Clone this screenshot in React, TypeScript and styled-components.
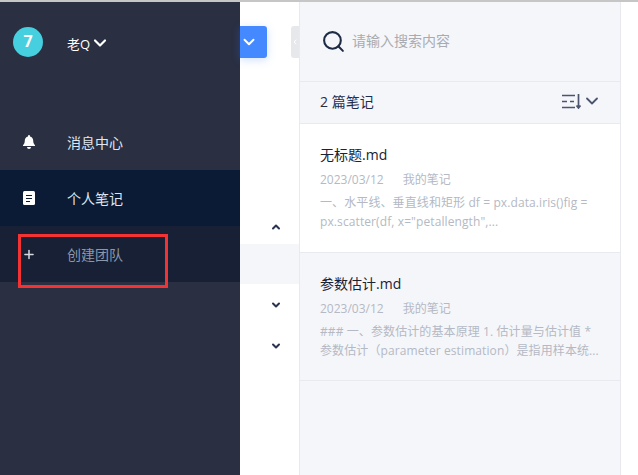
import React from "react";
import styled, { createGlobalStyle } from "styled-components";
import { ChevronDown, ChevronLeft, ChevronUp, Plus, Search } from "lucide-react";

const GlobalStyle = createGlobalStyle`
  html, body {
    margin: 0;
    padding: 0;
    background: #fff;
    overflow: hidden;
  }
  body {
    font-family: "Open Sans", "Noto Sans CJK SC", sans-serif;
  }
`;

const Page = styled.div`
  position: relative;
  width: 638px;
  height: 475px;
  box-sizing: border-box;
  border-top: 2px solid #c6c6c6;
  display: flex;
  overflow: hidden;
`;

const Sidebar = styled.aside`
  width: 240px;
  flex: none;
  background: #2a2f42;
  display: flex;
  flex-direction: column;
`;

const UserRow = styled.div`
  height: 112px;
  box-sizing: border-box;
  padding: 25px 0 0 13px;
  display: flex;
  align-items: flex-start;
`;

const Avatar = styled.div`
  width: 30px;
  height: 30px;
  border-radius: 50%;
  background: #45cfdf;
  color: #fff;
  font: bold 16px/29px "Open Sans", sans-serif;
  text-align: center;
  margin-right: 24px;
`;

const UserName = styled.div`
  display: flex;
  align-items: center;
  height: 32px;
  color: #fff;
  font-size: 13px;
`;

const MenuItem = styled.div<{ $bg?: string; $dim?: boolean }>`
  height: 56px;
  display: flex;
  align-items: center;
  padding-left: 22px;
  background: ${(p) => p.$bg || "transparent"};
  color: ${(p) => (p.$dim ? "#8b97ab" : "#dfe6ef")};
  font-size: 14px;
`;

const MenuIcon = styled.span`
  width: 14px;
  height: 14px;
  margin-right: 31px;
  display: flex;
  align-items: center;
  justify-content: center;
  color: #fff;
`;

const Middle = styled.section`
  width: 60px;
  flex: none;
  box-sizing: border-box;
  border-right: 1px solid #e8eaf0;
  display: flex;
  flex-direction: column;
`;

const ActionBar = styled.div`
  height: 32px;
  margin-top: 24px;
  display: flex;
  justify-content: space-between;
`;

const BlueButton = styled.div`
  width: 27px;
  height: 32px;
  box-sizing: border-box;
  padding-right: 9px;
  background: #4489ff;
  border-radius: 0 3px 3px 0;
  box-shadow: 0 2px 8px rgba(68, 137, 255, 0.25);
  color: #fff;
  display: flex;
  align-items: center;
  justify-content: center;
`;

const CollapseTab = styled.div`
  width: 8px;
  height: 32px;
  background: #e6e8ec;
  border-radius: 3px 0 0 3px;
  color: #fff;
  display: flex;
  align-items: center;
  justify-content: center;
`;

const TreeRow = styled.div<{ $h: number; $bg?: string; $end?: boolean }>`
  height: ${(p) => p.$h}px;
  background: ${(p) => p.$bg || "transparent"};
  box-sizing: border-box;
  padding-left: 30px;
  padding-bottom: ${(p) => (p.$end ? 11 : 0)}px;
  color: #2a3350;
  display: flex;
  align-items: ${(p) => (p.$end ? "flex-end" : "center")};
`;

const NotesPanel = styled.section`
  width: 321px;
  flex: none;
  box-sizing: border-box;
  border-right: 1px solid #e8eaf0;
  background: #f5f6fa;
  display: flex;
  flex-direction: column;
`;

const SearchBar = styled.div`
  height: 80px;
  box-sizing: border-box;
  border-bottom: 1px solid #e8eaf0;
  padding-left: 21px;
  display: flex;
  align-items: center;
  gap: 6px;
  color: #1d2b45;
`;

const Placeholder = styled.span`
  color: #a9abb0;
  font-size: 14px;
  margin-bottom: 3px;
`;

const CountRow = styled.div`
  height: 42px;
  box-sizing: border-box;
  border-bottom: 1px solid #e8eaf0;
  padding: 0 18px 3px 20px;
  display: flex;
  align-items: center;
  justify-content: space-between;
  color: #1f2d4d;
  font-size: 14px;
`;

const SortButton = styled.div`
  display: flex;
  align-items: center;
  color: #4c5570;
`;

const NoteCard = styled.article<{ $active?: boolean }>`
  height: ${(p) => (p.$active ? 129 : 128)}px;
  box-sizing: border-box;
  border-bottom: 1px solid #e8eaf0;
  background: ${(p) => (p.$active ? "#fff" : "#f5f6fa")};
  padding: 21px 20px 0;
`;

const NoteTitle = styled.div`
  color: #1a2233;
  font-size: 14px;
  line-height: 20px;
`;

const NoteMeta = styled.div`
  margin-top: 7px;
  display: flex;
  gap: 19px;
  color: #b4b9c4;
  font-size: 12px;
  line-height: 16px;
`;

const NoteText = styled.div`
  margin-top: 5px;
  color: #b4b9c4;
  font-size: 12px;
  line-height: 19px;
  letter-spacing: 0.1px;
  white-space: nowrap;
`;

// the red box drawn on top of the screenshot
const Annotation = styled.div`
  position: absolute;
  left: 18px;
  top: 232px;
  width: 150px;
  height: 54px;
  box-sizing: border-box;
  border: 3px solid #f33333;
  pointer-events: none;
`;

function BellIcon() {
  return (
    <svg width="12" height="14" viewBox="0 0 12 14" fill="#fff">
      <path d="M6 0a1 1 0 0 1 1 1v.4c2 .5 3.2 2.1 3.2 4.2 0 2.400.6 3.300 1.800 4.600v.8H0v-.8c1.200-1.300 1.800-2.200 1.800-4.600C1.800 3.500 3 1.900 5 1.400V1a1 1 0 0 1 1-1z" />
      <path d="M4 12h4a2 2 0 0 1-4 0z" />
    </svg>
  );
}

function NoteIcon() {
  return (
    <svg width="12" height="14" viewBox="0 0 12 14">
      <rect width="12" height="14" rx="1.500" fill="#fff" />
      <path d="M3 4.500h6M3 7.500h6M3 10.500h4" stroke="#0b1b35" strokeWidth="1.200" />
    </svg>
  );
}

function SortIcon() {
  return (
    <svg width="20" height="15" viewBox="0 0 20 15" fill="none" stroke="currentColor" strokeWidth="1.700">
      <path d="M0 1.500h13M0 7.500h5M8 7.500h4M0 13.500h13" />
      <path d="M16.500 0v14M14.500 11.500l2 2.500 2-2.500" />
    </svg>
  );
}

export default function App() {
  return (
    <>
      <GlobalStyle />
      <Page>
        <Sidebar>
          <UserRow>
            <Avatar>7</Avatar>
            <UserName>
              老Q <ChevronDown size={20} strokeWidth={2.6} />
            </UserName>
          </UserRow>
          <MenuItem>
            <MenuIcon>
              <BellIcon />
            </MenuIcon>
            消息中心
          </MenuItem>
          <MenuItem $bg="#0b1b35">
            <MenuIcon>
              <NoteIcon />
            </MenuIcon>
            个人笔记
          </MenuItem>
          <MenuItem $bg="#172034" $dim>
            <MenuIcon>
              <Plus size={17} strokeWidth={2.6} color="#d5d8df" />
            </MenuIcon>
            创建团队
          </MenuItem>
        </Sidebar>
        <Middle>
          <ActionBar>
            <BlueButton>
              <ChevronDown size={20} strokeWidth={2.6} />
            </BlueButton>
            <CollapseTab>
              <ChevronLeft size={10} strokeWidth={3} />
            </CollapseTab>
          </ActionBar>
          <TreeRow $h={186} $end>
            <ChevronUp size={12} strokeWidth={4} />
          </TreeRow>
          <TreeRow $h={40} $bg="#f5f6fa" />
          <TreeRow $h={42}>
            <ChevronDown size={12} strokeWidth={4} />
          </TreeRow>
          <TreeRow $h={40}>
            <ChevronDown size={12} strokeWidth={4} />
          </TreeRow>
        </Middle>
        <NotesPanel>
          <SearchBar>
            <Search size={25} strokeWidth={2} />
            <Placeholder>请输入搜索内容</Placeholder>
          </SearchBar>
          <CountRow>
            2 篇笔记
            <SortButton>
              <SortIcon />
              <ChevronDown size={20} strokeWidth={2.2} />
            </SortButton>
          </CountRow>
          <NoteCard $active>
            <NoteTitle>无标题.md</NoteTitle>
            <NoteMeta>
              <span>2023/03/12</span>
              <span>我的笔记</span>
            </NoteMeta>
            <NoteText>
              一、水平线、垂直线和矩形 df = px.data.iris()fig =
              <br />
              px.scatter(df, x="petallength",...
            </NoteText>
          </NoteCard>
          <NoteCard>
            <NoteTitle>参数估计.md</NoteTitle>
            <NoteMeta>
              <span>2023/03/12</span>
              <span>我的笔记</span>
            </NoteMeta>
            <NoteText>
              ### 一、参数估计的基本原理 1. 估计量与估计值 *
              <br />
              参数估计（parameter estimation）是指用样本统...
            </NoteText>
          </NoteCard>
        </NotesPanel>
        <Annotation />
      </Page>
    </>
  );
}
